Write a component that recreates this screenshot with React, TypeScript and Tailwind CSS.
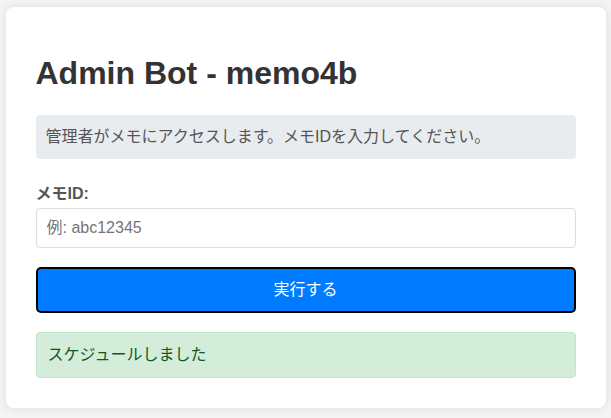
import React from "react";

export default function App() {
  return (
    <div
      className="min-h-screen bg-[#f4f4f4] pt-[7px]"
      style={{ fontFamily: '"Liberation Sans", "Noto Sans CJK JP", sans-serif' }}
    >
      <div className="mx-auto w-[600px] rounded-lg bg-white px-[30px] pt-[48px] pb-[30px] shadow-[0_0_10px_rgba(0,0,0,0.1)]">
        <h1 className="mb-[23px] text-[32px] font-bold leading-[37px] text-[#333]">
          Admin Bot - memo4b
        </h1>
        <p className="rounded-[4px] bg-[#e9ecef] px-[10px] py-[10px] text-[16px] leading-[24px] text-[#555]">
          管理者がメモにアクセスします。メモIDを入力してください。
        </p>
        <label className="mt-[23px] mb-[2px] block text-[16px] font-bold leading-[24px] text-[#555]">
          メモID:
        </label>
        <input
          type="text"
          placeholder="例: abc12345"
          className="block h-[40px] w-full rounded-[4px] border border-[#ddd] px-[10px] text-[16px] text-[#333] outline-none placeholder:text-[#757575]"
        />
        <button className="mt-[19px] block h-[46px] w-full rounded-[5px] border-2 border-black bg-[#007bff] text-[16px] text-white">
          実行する
        </button>
        <div className="mt-[19px] rounded-[4px] border border-[#c3e6cb] bg-[#d4edda] px-[11px] py-[10px] text-[16px] leading-[24px] text-[#155724]">
          スケジュールしました
        </div>
      </div>
    </div>
  );
}
